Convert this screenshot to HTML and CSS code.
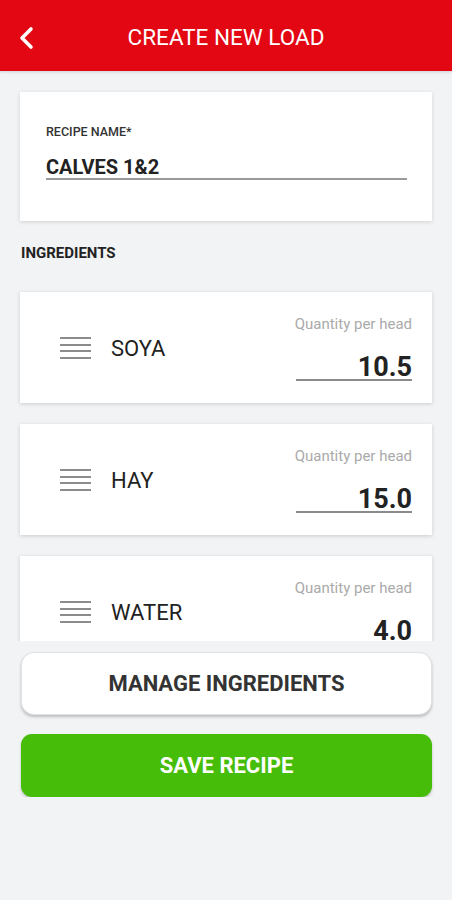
FILE: index.html
```html
<!DOCTYPE html>
<html lang="en">
<head>
    <meta charset="UTF-8">
    <meta name="viewport" content="width=device-width, initial-scale=1.0">
    <title>Create New Load</title>
    <link rel="stylesheet" href="styles.css">
</head>
<body>
    <header class="top-bar">
        <button class="back-btn" aria-label="Back">
            <svg width="18" height="24" viewBox="0 0 18 24">
                <polyline points="14,3 5,12 14,21" fill="none" stroke="#fff" stroke-width="3.6" stroke-linecap="round" stroke-linejoin="round"/>
            </svg>
        </button>
        <h1 class="title">CREATE NEW LOAD</h1>
    </header>

    <main class="scroll-area">
        <section class="recipe-card">
            <label class="field-label">RECIPE NAME*</label>
            <div class="recipe-input">CALVES 1&amp;2</div>
        </section>

        <h2 class="section-title">INGREDIENTS</h2>

        <div class="ingredient-list">
            <div class="ingredient">
                <div class="ingredient-left">
                    <svg class="drag" width="31" height="22" viewBox="0 0 31 22">
                        <rect x="0" y="0" width="31" height="2" fill="#8c8c8c"/>
                        <rect x="0" y="7" width="31" height="2" fill="#8c8c8c"/>
                        <rect x="0" y="13" width="31" height="2" fill="#8c8c8c"/>
                        <rect x="0" y="20" width="31" height="2" fill="#8c8c8c"/>
                    </svg>
                    <span class="ingredient-name">SOYA</span>
                </div>
                <div class="qty">
                    <span class="qty-label">Quantity per head</span>
                    <div class="qty-value">10.5</div>
                </div>
            </div>

            <div class="ingredient">
                <div class="ingredient-left">
                    <svg class="drag" width="31" height="22" viewBox="0 0 31 22">
                        <rect x="0" y="0" width="31" height="2" fill="#8c8c8c"/>
                        <rect x="0" y="7" width="31" height="2" fill="#8c8c8c"/>
                        <rect x="0" y="13" width="31" height="2" fill="#8c8c8c"/>
                        <rect x="0" y="20" width="31" height="2" fill="#8c8c8c"/>
                    </svg>
                    <span class="ingredient-name">HAY</span>
                </div>
                <div class="qty">
                    <span class="qty-label">Quantity per head</span>
                    <div class="qty-value">15.0</div>
                </div>
            </div>

            <div class="ingredient">
                <div class="ingredient-left">
                    <svg class="drag" width="31" height="22" viewBox="0 0 31 22">
                        <rect x="0" y="0" width="31" height="2" fill="#8c8c8c"/>
                        <rect x="0" y="7" width="31" height="2" fill="#8c8c8c"/>
                        <rect x="0" y="13" width="31" height="2" fill="#8c8c8c"/>
                        <rect x="0" y="20" width="31" height="2" fill="#8c8c8c"/>
                    </svg>
                    <span class="ingredient-name">WATER</span>
                </div>
                <div class="qty">
                    <span class="qty-label">Quantity per head</span>
                    <div class="qty-value">4.0</div>
                </div>
            </div>
        </div>
    </main>

    <div class="actions">
        <button class="btn btn-manage">MANAGE INGREDIENTS</button>
        <button class="btn btn-save">SAVE RECIPE</button>
    </div>
</body>
</html>
```

FILE: styles.css
```css
body {
    font-family: Roboto, "Liberation Sans", Arial, sans-serif;
    background-color: #f2f3f5;
    color: #222;
    margin: 0;
    padding: 0;
}

.top-bar {
    height: 71px;
    background-color: #e30613;
    display: flex;
    align-items: center;
    justify-content: center;
    position: relative;
    box-shadow: 0 1px 3px rgba(0, 0, 0, 0.15);
}

.back-btn {
    position: absolute;
    left: 17px;
    top: 26px;
    padding: 0;
    border: none;
    background: none;
    line-height: 0;
}

.title {
    margin: 2px 0 0;
    font-size: 22.5px;
    font-weight: 400;
    color: #fff;
}

.scroll-area {
    height: 549px;
    overflow: hidden;
    padding: 21px 20px 0;
}

.recipe-card {
    background-color: #fff;
    padding: 32px 25px 41px 26px;
    box-shadow: 0 1px 4px rgba(0, 0, 0, 0.14);
}

.field-label {
    display: block;
    font-size: 12.5px;
    line-height: 16px;
    font-weight: 500;
    color: #333;
}

.recipe-input {
    margin-top: 16px;
    font-size: 20px;
    line-height: 22px;
    font-weight: 700;
    color: #222;
    border-bottom: 2px solid #9a9a9a;
}

.section-title {
    margin: 24px 0 0 1px;
    font-size: 15px;
    line-height: 16px;
    font-weight: 700;
    color: #222;
}

.ingredient-list {
    margin-top: 31px;
    display: flex;
    flex-direction: column;
    gap: 21px;
}

.ingredient {
    height: 111px;
    flex-shrink: 0;
    background-color: #fff;
    box-shadow: 0 1px 4px rgba(0, 0, 0, 0.16);
    display: flex;
    align-items: center;
    justify-content: space-between;
    padding: 0 20px 0 40px;
}

.ingredient-left {
    display: flex;
    align-items: center;
    gap: 20px;
}

.ingredient-name {
    font-size: 22px;
    line-height: 24px;
    margin-top: 3px;
    color: #222;
}

.qty {
    display: flex;
    flex-direction: column;
    align-items: flex-end;
}

.qty-label {
    font-size: 15px;
    line-height: 20px;
    color: #aaa;
}

.qty-value {
    margin-top: 21px;
    width: 116px;
    text-align: right;
    font-size: 27px;
    line-height: 24px;
    font-weight: 700;
    color: #222;
    border-bottom: 2px solid #8a8a8a;
}

.actions {
    padding: 11px 20px 0 21px;
    display: flex;
    flex-direction: column;
    gap: 19px;
}

.btn {
    height: 63px;
    border-radius: 13px;
    font-family: Roboto, "Liberation Sans", Arial, sans-serif;
    font-size: 22px;
    font-weight: 700;
    cursor: pointer;
}

.btn-manage {
    background-color: #fff;
    color: #333;
    border: 1px solid #e2e2e2;
    box-shadow: 0 2px 3px rgba(0, 0, 0, 0.22);
}

.btn-save {
    background-color: #46bd08;
    color: #fff;
    border: none;
    border-radius: 11px;
    box-shadow: 0 2px 3px rgba(0, 0, 0, 0.2);
}
```
